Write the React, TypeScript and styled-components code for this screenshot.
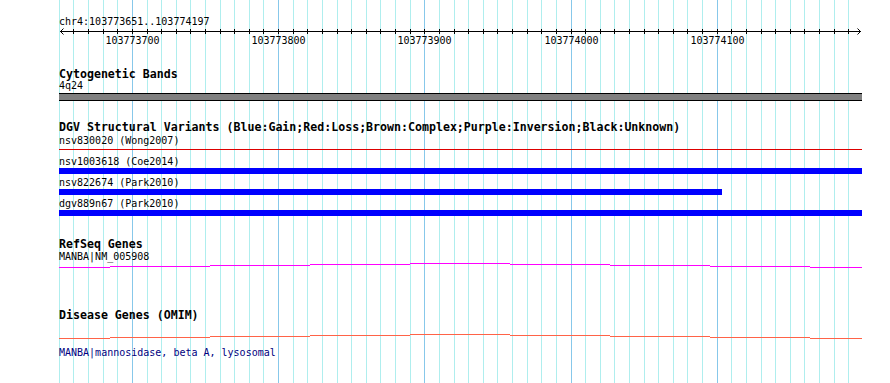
import React from "react";
import styled, { createGlobalStyle } from "styled-components";

const PANEL_W = 803;
const PANEL_H = 383;
const TICK_STEP = 14.62;
const TICK_COUNT = 55;

const tickX = (i: number) => Math.floor(0.3 + i * TICK_STEP);

const majorLabels: { [i: number]: string } = {
  5: "103773700",
  15: "103773800",
  25: "103773900",
  35: "103774000",
  45: "103774100",
};

// y offset (inside a 7px svg) per x span, gives the shallow arch of the gene models
const ARCH: [number, number, number][] = [
  [0, 51, 5],
  [51, 151, 4],
  [151, 251, 3],
  [251, 351, 2],
  [351, 451, 1],
  [451, 551, 2],
  [551, 651, 3],
  [651, 751, 4],
  [751, 803, 5],
];

const variants = [
  { label: "nsv830020 (Wong2007)", color: "#dd0000", width: PANEL_W, thin: true },
  { label: "nsv1003618 (Coe2014)", color: "#0000ff", width: PANEL_W, thin: false },
  { label: "nsv822674 (Park2010)", color: "#0000ff", width: 663, thin: false },
  { label: "dgv889n67 (Park2010)", color: "#0000ff", width: PANEL_W, thin: false },
];

const GlobalStyle = createGlobalStyle`
  html, body {
    margin: 0;
    padding: 0;
    background: #ffffff;
  }
  body {
    overflow: hidden;
  }
`;

const Page = styled.div`
  width: 890px;
  height: ${PANEL_H}px;
  display: flex;
  padding-left: 59px;
  box-sizing: border-box;
  background: #ffffff;
`;

const Panel = styled.div`
  position: relative;
  width: ${PANEL_W}px;
  height: ${PANEL_H}px;
  font-family: "DejaVu Sans Mono", "Liberation Mono", monospace;
`;

const GridLayer = styled.svg`
  position: absolute;
  left: 0;
  top: 0;
  z-index: 0;
`;

const Tracks = styled.div`
  position: relative;
  z-index: 1;
  display: flex;
  flex-direction: column;
`;

const Location = styled.div`
  margin-top: 16px;
  font-size: 10px;
  line-height: 11px;
  color: #000;
  white-space: pre;
`;

const RulerSvg = styled.svg`
  display: block;
  overflow: visible;
`;

const TrackTitle = styled.div<{ $gap: number }>`
  margin-top: ${(p) => p.$gap}px;
  font-size: 11.6px;
  font-weight: bold;
  line-height: 13px;
  color: #000;
  white-space: pre;
`;

const FeatureLabel = styled.div<{ $gap?: number; $color?: string; $lh?: number }>`
  margin-top: ${(p) => p.$gap ?? 0}px;
  font-size: 10px;
  line-height: ${(p) => p.$lh ?? 11}px;
  color: ${(p) => p.$color ?? "#000"};
  white-space: pre;
`;

const Band = styled.div`
  margin-top: 2px;
  height: 6px;
  width: ${PANEL_W}px;
  background: #808080;
  border-top: 1px solid #000;
  border-bottom: 1px solid #000;
`;

const VariantList = styled.div`
  margin-top: 1px;
  display: flex;
  flex-direction: column;
  gap: 3px;
`;

const VariantRow = styled.div`
  display: flex;
  flex-direction: column;
`;

const VariantSlot = styled.div`
  margin-top: 1px;
  height: 6px;
  display: flex;
  align-items: flex-start;
`;

const VariantBar = styled.div<{ $color: string; $thin: boolean }>`
  margin-top: ${(p) => (p.$thin ? 2 : 0)}px;
  height: ${(p) => (p.$thin ? 1 : 6)}px;
  background: ${(p) => p.$color};
`;

const ArchSvg = styled.svg<{ $gap: number }>`
  display: block;
  margin-top: ${(p) => p.$gap}px;
`;

const Grid = () => (
  <GridLayer width={PANEL_W} height={PANEL_H} shapeRendering="crispEdges">
    {Array.from({ length: TICK_COUNT }, (_, i) => (
      <line
        key={i}
        x1={tickX(i) + 0.5}
        x2={tickX(i) + 0.5}
        y1={0}
        y2={PANEL_H}
        stroke={i % 10 === 5 ? "#87c8ea" : "#afeeee"}
        strokeWidth={1}
      />
    ))}
  </GridLayer>
);

const Ruler = () => (
  <RulerSvg width={PANEL_W} height={19}>
    <line x1={1} x2={802} y1={4.5} y2={4.5} stroke="#000" shapeRendering="crispEdges" />
    <path d="M4.5 1.5 L1.5 4.5 L4.5 7.5" stroke="#000" fill="none" />
    <path d="M798.5 1.5 L801.5 4.5 L798.5 7.5" stroke="#000" fill="none" />
    {Array.from({ length: TICK_COUNT - 1 }, (_, k) => {
      const x = tickX(k + 1) + 0.5;
      return (
        <line key={k} x1={x} x2={x} y1={2} y2={7} stroke="#000" shapeRendering="crispEdges" />
      );
    })}
    {Object.entries(majorLabels).map(([i, text]) => (
      <text
        key={i}
        x={tickX(Number(i)) + 0.5}
        y={17}
        textAnchor="middle"
        fontSize={10}
        fontFamily='"DejaVu Sans Mono", "Liberation Mono", monospace'
        fill="#000"
      >
        {text}
      </text>
    ))}
  </RulerSvg>
);

const Arch = ({ color, gap }: { color: string; gap: number }) => (
  <ArchSvg $gap={gap} width={PANEL_W} height={7} shapeRendering="crispEdges">
    <path
      d={ARCH.map(([a, b, y]) => `M${a} ${y + 0.5} H${b}`).join(" ")}
      stroke={color}
      strokeWidth={1}
      fill="none"
    />
  </ArchSvg>
);

export default function App() {
  return (
    <>
      <GlobalStyle />
      <Page>
        <Panel>
          <Grid />
          <Tracks>
            <Location>chr4:103773651..103774197</Location>
            <Ruler />

            <TrackTitle $gap={22}>Cytogenetic Bands</TrackTitle>
            <FeatureLabel $lh={10}>4q24</FeatureLabel>
            <Band />

            <TrackTitle $gap={20}>
              DGV Structural Variants (Blue:Gain;Red:Loss;Brown:Complex;Purple:Inversion;Black:Unknown)
            </TrackTitle>
            <VariantList>
              {variants.map((v) => (
                <VariantRow key={v.label}>
                  <FeatureLabel>{v.label}</FeatureLabel>
                  <VariantSlot>
                    <VariantBar $color={v.color} $thin={v.thin} style={{ width: v.width }} />
                  </VariantSlot>
                </VariantRow>
              ))}
            </VariantList>

            <TrackTitle $gap={22}>RefSeq Genes</TrackTitle>
            <FeatureLabel>MANBA|NM_005908</FeatureLabel>
            <Arch color="#ff00ff" gap={0} />

            <TrackTitle $gap={40}>Disease Genes (OMIM)</TrackTitle>
            <Arch color="#ff6347" gap={11} />
            <FeatureLabel $gap={7} $color="#000080">
              MANBA|mannosidase, beta A, lysosomal
            </FeatureLabel>
          </Tracks>
        </Panel>
      </Page>
    </>
  );
}
